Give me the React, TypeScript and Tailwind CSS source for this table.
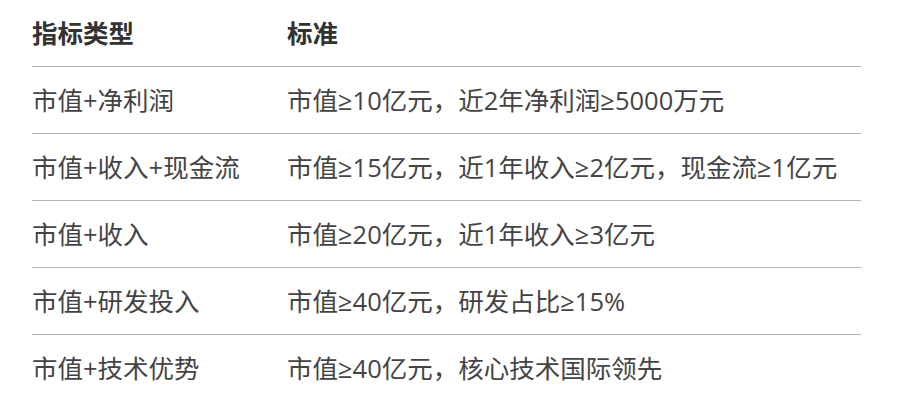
const rows: [string, string][] = [
  ["市值+净利润", "市值≥10亿元，近2年净利润≥5000万元"],
  ["市值+收入+现金流", "市值≥15亿元，近1年收入≥2亿元，现金流≥1亿元"],
  ["市值+收入", "市值≥20亿元，近1年收入≥3亿元"],
  ["市值+研发投入", "市值≥40亿元，研发占比≥15%"],
  ["市值+技术优势", "市值≥40亿元，核心技术国际领先"],
];

export default function App() {
  return (
    <div
      className="w-[910px] h-[402px] bg-white overflow-hidden"
      style={{ fontFamily: '"Open Sans", "Noto Sans CJK SC", sans-serif' }}
    >
      <div className="ml-[32px] w-[829px]">
        <div className="grid grid-cols-[255px_1fr] h-[67px] items-center border-b border-[#b4b4b4] text-[25.5px] font-bold text-[#333333]">
          <div>指标类型</div>
          <div>标准</div>
        </div>
        {rows.map(([type, rule], i) => (
          <div
            key={type}
            className={
              "grid grid-cols-[255px_1fr] h-[67px] items-center text-[25.5px] text-[#444444] " +
              (i < rows.length - 1 ? "border-b border-[#b4b4b4]" : "")
            }
          >
            <div>{type}</div>
            <div>{rule}</div>
          </div>
        ))}
      </div>
    </div>
  );
}
